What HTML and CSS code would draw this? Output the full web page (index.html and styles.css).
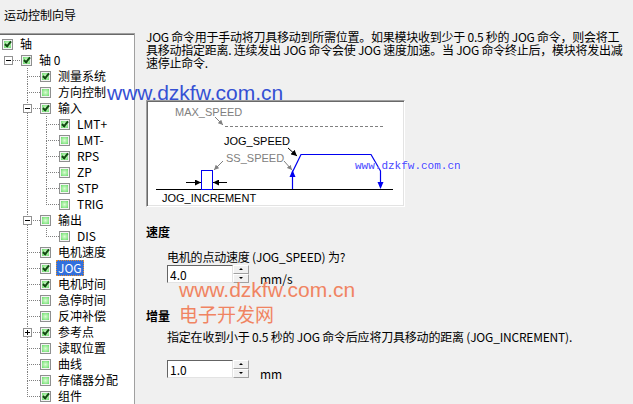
FILE: index.html
```html
<!DOCTYPE html>
<html lang="zh-CN">
<head>
  <meta charset="UTF-8">
  <title>运动控制向导</title>
  <link rel="stylesheet" href="styles.css">
</head>
<body>
<div class="wizard">
  <div class="side">
    <div class="title">运动控制向导</div>
    <div class="tree-box">
      <ul class="tree">
        <li>
          <div class="row"><span class="cb on"></span><span class="label">轴</span></div>
          <ul>
            <li class="top">
              <span class="exp"></span>
              <div class="row"><span class="cb on"></span><span class="label">轴 0</span></div>
              <ul>
                <li><div class="row"><span class="cb on"></span><span class="label">测量系统</span></div></li>
                <li><div class="row"><span class="cb"></span><span class="label">方向控制</span></div></li>
                <li>
                  <span class="exp"></span>
                  <div class="row"><span class="cb on"></span><span class="label">输入</span></div>
                  <ul>
                    <li><div class="row"><span class="cb on"></span><span class="label">LMT+</span></div></li>
                    <li><div class="row"><span class="cb"></span><span class="label">LMT-</span></div></li>
                    <li><div class="row"><span class="cb on"></span><span class="label">RPS</span></div></li>
                    <li><div class="row"><span class="cb"></span><span class="label">ZP</span></div></li>
                    <li><div class="row"><span class="cb"></span><span class="label">STP</span></div></li>
                    <li><div class="row"><span class="cb"></span><span class="label">TRIG</span></div></li>
                  </ul>
                </li>
                <li>
                  <span class="exp"></span>
                  <div class="row"><span class="cb"></span><span class="label">输出</span></div>
                  <ul>
                    <li><div class="row"><span class="cb"></span><span class="label">DIS</span></div></li>
                  </ul>
                </li>
                <li><div class="row"><span class="cb on"></span><span class="label">电机速度</span></div></li>
                <li><div class="row"><span class="cb on"></span><span class="label selected">JOG</span></div></li>
                <li><div class="row"><span class="cb on"></span><span class="label">电机时间</span></div></li>
                <li><div class="row"><span class="cb"></span><span class="label">急停时间</span></div></li>
                <li><div class="row"><span class="cb"></span><span class="label">反冲补偿</span></div></li>
                <li>
                  <span class="exp plus"></span>
                  <div class="row"><span class="cb on"></span><span class="label">参考点</span></div>
                </li>
                <li><div class="row"><span class="cb"></span><span class="label">读取位置</span></div></li>
                <li><div class="row"><span class="cb"></span><span class="label">曲线</span></div></li>
                <li><div class="row"><span class="cb"></span><span class="label">存储器分配</span></div></li>
                <li><div class="row"><span class="cb on"></span><span class="label">组件</span></div></li>
              </ul>
            </li>
          </ul>
        </li>
      </ul>
    </div>
  </div>

  <div class="main">
    <p class="intro">JOG 命令用于手动将刀具移动到所需位置。如果模块收到少于 0.5 秒的 JOG 命令，则会将工<br>具移动指定距离. 连续发出 JOG 命令会使 JOG 速度加速。当 JOG 命令终止后，模块将发出减<br>速停止命令.</p>

    <div class="diagram">
      <svg width="257" height="105" viewBox="147 101 257 105">
        <defs>
          <marker id="ah-gray" viewBox="0 0 6 6" refX="6" refY="3" markerWidth="5" markerHeight="5" markerUnits="userSpaceOnUse" orient="auto">
            <path d="M0,0 L6,3 L0,6 z" fill="#808080"/>
          </marker>
          <marker id="ah-black" viewBox="0 0 6 6" refX="6" refY="3" markerWidth="6" markerHeight="6" markerUnits="userSpaceOnUse" orient="auto">
            <path d="M0,0 L6,3 L0,6 z" fill="#000"/>
          </marker>
        </defs>
        <text x="175" y="116" class="lbl dim">MAX_SPEED</text>
        <line x1="215" y1="117" x2="223" y2="125" stroke="#808080" marker-end="url(#ah-gray)"/>
        <line x1="225" y1="126.5" x2="383" y2="126.5" stroke="#808080" stroke-dasharray="3 2"/>

        <text x="224" y="145" class="lbl">JOG_SPEED</text>
        <line x1="288" y1="148" x2="297" y2="156" stroke="#000" marker-end="url(#ah-black)"/>

        <text x="226" y="162" class="lbl dim">SS_SPEED</text>
        <line x1="223" y1="161" x2="214" y2="170" stroke="#808080" marker-end="url(#ah-gray)"/>
        <line x1="284" y1="161" x2="292" y2="170" stroke="#808080" marker-end="url(#ah-gray)"/>

        <line x1="156" y1="189.5" x2="393" y2="189.5" stroke="#000"/>
        <path d="M292.5,189 V172 L301,154.5 H371 L380.5,171 V186" fill="none" stroke="#0000f0" stroke-width="1.2"/>
        <path d="M289.5,177 L292.5,170 L295.5,177 z" fill="#0000f0"/>
        <path d="M377.5,182 L380.5,189 L383.5,182 z" fill="#0000f0"/>

        <rect x="201.5" y="170.5" width="11" height="19" fill="none" stroke="#0000f0"/>
        <line x1="186" y1="182.5" x2="201" y2="182.5" stroke="#000" marker-end="url(#ah-black)"/>
        <line x1="227" y1="182.5" x2="213" y2="182.5" stroke="#000" marker-end="url(#ah-black)"/>
        <text x="162" y="202" class="lbl">JOG_INCREMENT</text>
      </svg>
    </div>

    <h3 class="section">速度</h3>
    <p class="prompt">电机的点动速度 (JOG_SPEED) 为?</p>
    <div class="field-row">
      <div class="spin">
        <input class="num" type="text" value="4.0">
        <span class="spin-btns"><span class="up"></span><span class="down"></span></span>
      </div>
      <span class="unit">mm/s</span>
    </div>

    <h3 class="section second">增量</h3>
    <p class="prompt desc">指定在收到小于 0.5 秒的 JOG 命令后应将刀具移动的距离 (JOG_INCREMENT).</p>
    <div class="field-row last">
      <div class="spin">
        <input class="num" type="text" value="1.0">
        <span class="spin-btns"><span class="up"></span><span class="down"></span></span>
      </div>
      <span class="unit">mm</span>
    </div>
  </div>

  <!-- watermarks printed over the capture -->
  <div class="wm wm-blue">www.dzkfw.com.cn</div>
  <div class="wm wm-mono">www.dzkfw.com.cn</div>
  <div class="wm wm-orange">www.dzkfw.com.cn</div>
  <div class="wm wm-cn">电子开发网</div>
</div>
</body>
</html>
```

FILE: styles.css
```css
body {
  margin: 0;
  background: #f0f0f0;
  font-family: "Noto Sans CJK SC", sans-serif;
  font-size: 12px;
  color: #000;
  overflow: hidden;
}
.wizard {
  position: relative;
  display: flex;
  height: 404px;
}

/* left column: title + tree */
.side {
  width: 135px;
  flex-shrink: 0;
  display: flex;
  flex-direction: column;
}
.title {
  height: 33px;
  box-sizing: border-box;
  padding: 8px 0 0 4px;
  line-height: 13px;
}
.tree-box {
  flex: 1;
  background: #fff;
  border-top: 1px solid #a0a0a0;
  border-right: 1px solid #a0a0a0;
  box-shadow: inset 0 1px #696969;
  padding: 2px 0 0 2px;
  overflow: hidden;
}
.tree, .tree ul {
  list-style: none;
  margin: 0;
  padding: 0;
}
.tree ul {
  padding-left: 19px;
}
.tree li {
  position: relative;
}
.tree ul li::before {
  content: "";
  position: absolute;
  left: -13px;
  top: 0;
  width: 12px;
  height: 8px;
  border-left: 1px dotted #808080;
  border-bottom: 1px dotted #808080;
}
.tree ul li:not(:last-child)::after {
  content: "";
  position: absolute;
  left: -13px;
  top: 9px;
  bottom: 0;
  border-left: 1px dotted #808080;
}
.tree li.top::before {
  border-left: 0;
}
.row {
  display: flex;
  align-items: center;
  height: 16px;
}
.cb {
  position: relative;
  width: 11px;
  height: 11px;
  box-sizing: border-box;
  flex-shrink: 0;
  margin-right: 5px;
  border: 1px solid #8e8f8f;
  background: radial-gradient(circle, #dcfcd4 0%, #8ae68a 55%, #3cc53c 100%);
  box-shadow: inset 0 0 0 1px #f4f4f4;
}
.cb.on::after {
  content: "";
  position: absolute;
  left: 3px;
  top: 0;
  width: 2px;
  height: 5px;
  border: solid #124a12;
  border-width: 0 2px 2px 0;
  transform: rotate(40deg);
}
.label {
  padding: 0 1px;
  line-height: 14px;
  border: 1px dotted transparent;
  white-space: nowrap;
}
.label.selected {
  background: #3370dc;
  color: #fff;
  border-color: #e8902c;
}
.exp {
  position: absolute;
  left: -17px;
  top: 4px;
  width: 9px;
  height: 9px;
  box-sizing: border-box;
  border: 1px solid #919191;
  background: #fff;
  z-index: 1;
}
.exp::before {
  content: "";
  position: absolute;
  left: 1px;
  top: 3px;
  width: 5px;
  height: 1px;
  background: #000;
}
.exp.plus::after {
  content: "";
  position: absolute;
  left: 3px;
  top: 1px;
  width: 1px;
  height: 5px;
  background: #000;
}

/* right column */
.main {
  flex: 1;
  min-width: 0;
  padding: 30px 0 0 11px;
}
.intro {
  margin: 0;
  line-height: 13px;
  letter-spacing: -0.25px;
  white-space: nowrap;
}
.diagram {
  margin-top: 31px;
  width: 259px;
  height: 107px;
  box-sizing: border-box;
  background: #fff;
  border: 1px solid;
  border-color: #a0a0a0 #fff #fff #a0a0a0;
  box-shadow: inset 1px 1px #696969, inset -1px -1px #e3e3e3;
}
.diagram svg {
  display: block;
}
.lbl {
  font-family: "Liberation Sans", sans-serif;
  font-size: 11px;
  fill: #000;
}
.lbl.dim {
  fill: #808080;
}
.section {
  margin: 18px 0 0 0;
  font-size: 12px;
  font-weight: bold;
  line-height: 13px;
}
.section.second {
  margin-top: 26px;
}
.prompt {
  margin: 12px 0 0 21px;
  line-height: 13px;
  letter-spacing: -0.2px;
  white-space: nowrap;
}
.prompt.desc {
  margin-top: 8px;
}
.field-row {
  display: flex;
  align-items: flex-end;
  margin: 2px 0 0 21px;
}
.field-row.last {
  margin-top: 17px;
}
.spin {
  display: flex;
  height: 18px;
}
.num {
  width: 66px;
  height: 18px;
  box-sizing: border-box;
  margin: 0;
  padding: 0 2px;
  border: 1px solid;
  border-color: #646464 #e3e3e3 #e3e3e3 #646464;
  background: #fff;
  font: inherit;
  line-height: 16px;
  outline: none;
}
.spin-btns {
  display: flex;
  flex-direction: column;
  width: 16px;
}
.spin-btns span {
  position: relative;
  flex: 1;
  background: #f0f0f0;
  border: 1px solid;
  border-color: #fff #a0a0a0 #a0a0a0 #fff;
}
.spin-btns span::after {
  content: "";
  position: absolute;
  left: 5px;
  top: 2px;
  border-left: 2px solid transparent;
  border-right: 2px solid transparent;
}
.spin-btns .up::after {
  border-bottom: 2px solid #000;
}
.spin-btns .down::after {
  border-top: 2px solid #000;
}
.unit {
  margin: 0 0 -2px 11px;
  line-height: 13px;
}

/* watermarks */
.wm {
  position: absolute;
  white-space: nowrap;
  pointer-events: none;
}
.wm-blue {
  left: 107px;
  top: 82px;
  font-family: "Liberation Sans", sans-serif;
  font-size: 21px;
  line-height: 21px;
  color: #3550d4;
}
.wm-mono {
  left: 355px;
  top: 161px;
  font-family: "Liberation Mono", monospace;
  font-size: 11px;
  line-height: 11px;
  color: #4646ff;
  text-shadow: 0 0 2px #fff, 0 0 2px #fff;
}
.wm-orange {
  left: 179px;
  top: 279px;
  font-family: "Liberation Sans", sans-serif;
  font-size: 21px;
  line-height: 21px;
  color: #f08462;
}
.wm-cn {
  left: 179px;
  top: 303px;
  font-size: 19px;
  line-height: 22px;
  color: #f08462;
}
```
